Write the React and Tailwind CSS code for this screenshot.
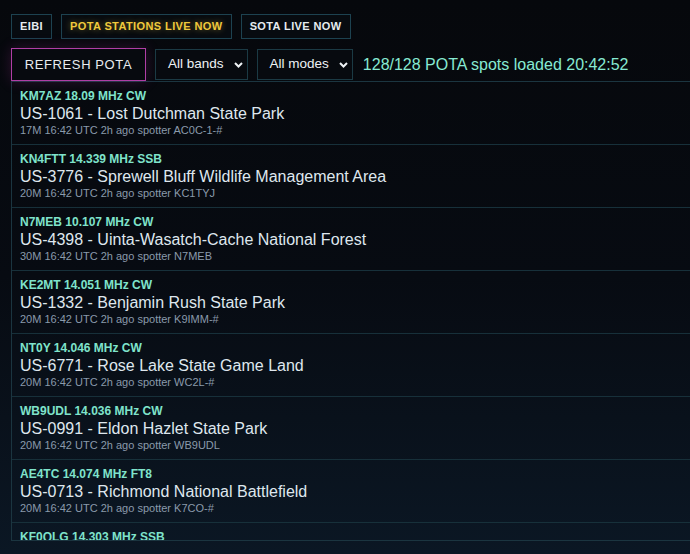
const spots = [
  { call: "KM7AZ 18.09 MHz CW", park: "US-1061 - Lost Dutchman State Park", meta: "17M 16:42 UTC 2h ago spotter AC0C-1-#" },
  { call: "KN4FTT 14.339 MHz SSB", park: "US-3776 - Sprewell Bluff Wildlife Management Area", meta: "20M 16:42 UTC 2h ago spotter KC1TYJ" },
  { call: "N7MEB 10.107 MHz CW", park: "US-4398 - Uinta-Wasatch-Cache National Forest", meta: "30M 16:42 UTC 2h ago spotter N7MEB" },
  { call: "KE2MT 14.051 MHz CW", park: "US-1332 - Benjamin Rush State Park", meta: "20M 16:42 UTC 2h ago spotter K9IMM-#" },
  { call: "NT0Y 14.046 MHz CW", park: "US-6771 - Rose Lake State Game Land", meta: "20M 16:42 UTC 2h ago spotter WC2L-#" },
  { call: "WB9UDL 14.036 MHz CW", park: "US-0991 - Eldon Hazlet State Park", meta: "20M 16:42 UTC 2h ago spotter WB9UDL" },
  { call: "AE4TC 14.074 MHz FT8", park: "US-0713 - Richmond National Battlefield", meta: "20M 16:42 UTC 2h ago spotter K7CO-#" },
  { call: "KF0QLG 14.303 MHz SSB", park: "US-2104 - Lake Thunderbird State Park", meta: "20M 16:42 UTC 2h ago spotter KF0QLG" },
]

const tabs = [
  { label: "EIBI", active: false },
  { label: "POTA STATIONS LIVE NOW", active: true },
  { label: "SOTA LIVE NOW", active: false },
]

function FakeSelect({ label }) {
  return (
    <div className="flex h-[31px] items-center gap-[10px] border border-[#1b3a44] bg-[#070a0f] pl-[12px] pr-[4px] text-[13.5px] text-[#eef2f5]">
      <span>{label}</span>
      <svg width="9" height="6" viewBox="0 0 9 6" fill="none">
        <path d="M1 1l3.5 3.5L8 1" stroke="currentColor" strokeWidth="2" />
      </svg>
    </div>
  )
}

export default function App() {
  return (
    <div
      className="h-[554px] overflow-hidden bg-gradient-to-b from-[#06080c] via-[#070b12] to-[#0b1724] pl-[11px] pt-[14px]"
      style={{ fontFamily: '"Liberation Sans", Arial, sans-serif' }}
    >
      {/* tabs */}
      <div className="flex gap-[9px]">
        {tabs.map((t) => (
          <div
            key={t.label}
            className={`flex h-[25px] items-center border border-[#1d4250] bg-[#070b10] px-[8px] text-[11px] font-bold tracking-[0.4px] ${
              t.active
                ? "text-[#f0c93c] [text-shadow:0_0_6px_rgba(240,200,60,0.45)]"
                : "text-[#e6ebef]"
            }`}
          >
            {t.label}
          </div>
        ))}
      </div>

      {/* controls */}
      <div className="mt-[9px] flex h-[33px] items-center gap-[9px]">
        <div className="flex h-[33px] w-[135px] items-center justify-center border border-[#b03ea6] bg-[#070a0f] text-[13px] tracking-[0.6px] text-[#e8ecef] shadow-[0_0_14px_rgba(190,50,170,0.22)]">
          REFRESH POTA
        </div>
        <FakeSelect label="All bands" />
        <FakeSelect label="All modes" />
        <span className="ml-[1px] text-[16px] text-[#86ead3]">
          128/128 POTA spots loaded 20:42:52
        </span>
      </div>

      {/* spot list */}
      <div className="h-[460px] w-[720px] overflow-hidden border-y border-l border-[#1b3540]">
        {spots.map((s) => (
          <div key={s.call} className="border-b border-[#17303a] px-[8px] pb-[7px] pt-[6px]">
            <div className="text-[12px] font-bold leading-[16px] text-[#7fe3cb]">{s.call}</div>
            <div className="text-[16px] leading-[19px] text-[#dfe7ee]">{s.park}</div>
            <div className="text-[11px] leading-[14px] text-[#8a9aab]">{s.meta}</div>
          </div>
        ))}
      </div>
    </div>
  )
}
